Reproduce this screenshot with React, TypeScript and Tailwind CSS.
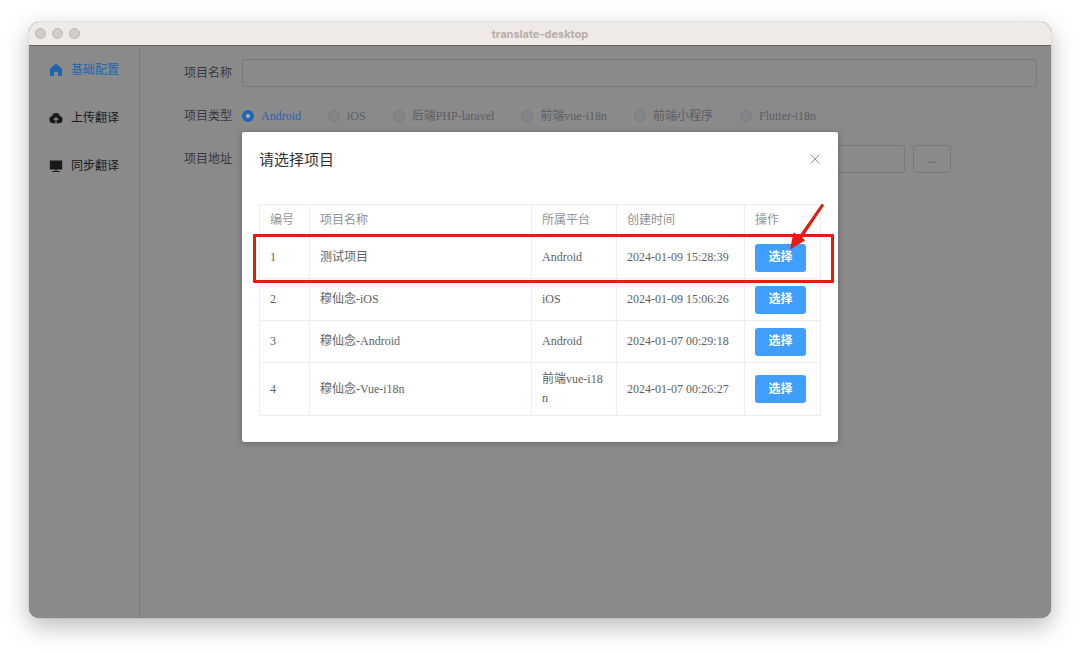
import React from 'react';

type Project = {
  id: number;
  name: string;
  platform: string;
  createdAt: string;
};

const projects: Project[] = [
  { id: 1, name: '测试项目', platform: 'Android', createdAt: '2024-01-09 15:28:39' },
  { id: 2, name: '穆仙念-iOS', platform: 'iOS', createdAt: '2024-01-09 15:06:26' },
  { id: 3, name: '穆仙念-Android', platform: 'Android', createdAt: '2024-01-07 00:29:18' },
  { id: 4, name: '穆仙念-Vue-i18n', platform: '前端vue-i18n', createdAt: '2024-01-07 00:26:27' },
];

const projectTypes = ['Android', 'iOS', '后端PHP-laravel', '前端vue-i18n', '前端小程序', 'Flutter-i18n'];

const HomeIcon = () => (
  <svg viewBox="0 0 14 14" className="size-3.5" fill="currentColor" aria-hidden="true">
    <path d="M6.2 1.2a1.2 1.2 0 0 1 1.6 0l4.8 4.1c.3.3.4.6.4 1v6c0 .4-.3.7-.7.7H9V9.500c0-.3-.2-.5-.5-.5h-3c-.3 0-.5.2-.5.5V13H1.700c-.4 0-.7-.3-.7-.7v-6c0-.4.1-.7.4-1z" />
  </svg>
);

const CloudUploadIcon = () => (
  <svg viewBox="0 0 14 14" className="size-3.5" aria-hidden="true">
    <path
      fill="currentColor"
      d="M7 1.900a4 4 0 0 1 3.900 3.200A3.400 3.400 0 0 1 13.600 8.500a3.700 3.700 0 0 1-3.700 3.700H4.100A3.700 3.700 0 0 1 .4 8.500a3.400 3.400 0 0 1 2.700-3.400A4 4 0 0 1 7 1.900z"
    />
    <path fill="none" stroke="#8a8a8a" strokeWidth="1.1" d="M7 12.300V7M4.800 9 7 6.800 9.200 9" />
  </svg>
);

const MonitorIcon = () => (
  <svg viewBox="0 0 14 14" className="size-3.5" fill="currentColor" aria-hidden="true">
    <path d="M1.200 1.500h11.600c.2 0 .4.200.4.400v8.200c0 .2-.2.400-.4.400H1.200a.4.4 0 0 1-.4-.4V1.900c0-.2.200-.4.400-.4zM6.400 10.500h1.200v1.400H6.400zM3.300 11.900h7.400v1H3.300z" />
  </svg>
);

const menu = [
  { label: '基础配置', icon: <HomeIcon />, active: true },
  { label: '上传翻译', icon: <CloudUploadIcon />, active: false },
  { label: '同步翻译', icon: <MonitorIcon />, active: false },
];

const TitleBar = () => (
  <header className="grid h-6 grid-cols-[1fr_auto_1fr] items-center border-b border-[#626262] bg-[#efeae6] px-1.5">
    <div className="flex gap-1.5">
      <span className="size-[11px] rounded-full border border-[#bdb8b5] bg-[#d2cdca]" />
      <span className="size-[11px] rounded-full border border-[#bdb8b5] bg-[#d2cdca]" />
      <span className="size-[11px] rounded-full border border-[#bdb8b5] bg-[#d2cdca]" />
    </div>
    <h1 className="font-[Inter,sans-serif] text-[11px] leading-4 font-bold text-[#b5afab]">translate-desktop</h1>
  </header>
);

const Sidebar = () => (
  <nav className="w-[111px] shrink-0 border-r border-[#7b7b7c]">
    {menu.map((item) => (
      <a
        key={item.label}
        href="#"
        className={`flex h-12 items-center gap-2 pl-5 ${item.active ? 'text-[#1f66b0]' : 'text-[#19191b]'}`}
      >
        {item.icon}
        {item.label}
      </a>
    ))}
  </nav>
);

const ProjectForm = () => (
  <form className="flex flex-1 flex-col gap-[15px] pt-[13px] pr-3.5 pl-11 text-[#38393b]">
    <div className="flex items-center gap-2.5">
      <label htmlFor="name" className="w-12 shrink-0">
        项目名称
      </label>
      <input id="name" className="h-7 min-w-0 flex-1 rounded-[3px] border border-[#77787a] px-2" />
    </div>
    <div role="radiogroup" aria-labelledby="type-label" className="flex h-7 items-center gap-2.5">
      <span id="type-label" className="w-12 shrink-0">
        项目类型
      </span>
      <div className="flex items-center gap-[27px]">
        {projectTypes.map((type, i) => (
          <label
            key={type}
            className={`flex items-center gap-[7px] whitespace-nowrap ${i === 0 ? 'text-[#1f66b0]' : 'text-[#5c5e62]'}`}
          >
            <input
              type="radio"
              name="type"
              defaultChecked={i === 0}
              disabled={i !== 0}
              className="size-3 appearance-none rounded-full border border-[#7c7d80] bg-[#848588] checked:border-4 checked:border-[#1f66b0] checked:bg-[#a5b4c4]"
            />
            {type}
          </label>
        ))}
      </div>
    </div>
    <div className="flex items-center gap-2.5">
      <label htmlFor="path" className="w-12 shrink-0">
        项目地址
      </label>
      <div className="flex flex-1 gap-2">
        <input id="path" className="h-7 w-5/6 rounded-[3px] border border-[#77787a] px-2" />
        <button type="button" className="h-7 w-[38px] rounded-[3px] border border-[#77787a] text-[#55575a]">
          ...
        </button>
      </div>
    </div>
  </form>
);

const ProjectTable = () => (
  <div className="relative">
    <table className="w-full table-fixed border-collapse text-left leading-[19px] text-[#606266]">
      <colgroup>
        <col className="w-[50px]" />
        <col />
        <col className="w-[85px]" />
        <col className="w-32" />
        <col className="w-[76px]" />
      </colgroup>
      <thead>
        <tr className="h-8 text-[#909399]">
          {['编号', '项目名称', '所属平台', '创建时间', '操作'].map((title) => (
            <th key={title} className="border border-[#ebeef5] px-2.5 font-normal">
              {title}
            </th>
          ))}
        </tr>
      </thead>
      <tbody>
        {projects.map((project) => (
          <tr key={project.id} className="h-[42px]">
            <td className="border border-[#ebeef5] px-2.5">{project.id}</td>
            <td className="border border-[#ebeef5] px-2.5">{project.name}</td>
            <td className="border border-[#ebeef5] px-2.5 py-[7px] break-all">{project.platform}</td>
            <td className="border border-[#ebeef5] px-2.5 whitespace-nowrap">{project.createdAt}</td>
            <td className="border border-[#ebeef5] px-2.5">
              <button type="button" className="block h-7 w-[51px] rounded-[3px] bg-[#409eff] font-bold text-white">
                选择
              </button>
            </td>
          </tr>
        ))}
      </tbody>
    </table>
    <div className="pointer-events-none absolute top-[30px] -right-[13px] -left-1.5 h-[49px] rounded-[1px] border-[3px] border-[#e01f12]" />
    <svg
      viewBox="0 0 36 48"
      className="pointer-events-none absolute -top-px -right-1 h-12 w-9"
      fill="#e01f12"
      aria-hidden="true"
    >
      <path d="M32.800.500 35.200 2.200 13.500 34.500 16 37.500 1 46.500 4.500 29.500 10.500 32.500z" />
    </svg>
  </div>
);

const ProjectDialog = () => (
  <div className="absolute inset-0 flex items-start justify-center pt-[86px]">
    <section
      role="dialog"
      aria-labelledby="dialog-title"
      className="w-[596px] rounded-[2px] bg-white px-[17px] pb-[26px] shadow-[0_1px_6px_rgba(0,0,0,0.3)]"
    >
      <div className="flex h-[72px] items-start justify-between pt-4">
        <h2 id="dialog-title" className="text-[15px] leading-6 text-[#303133]">
          请选择项目
        </h2>
        <button type="button" aria-label="关闭" className="py-1.5 pr-px pl-1 text-[#909399]">
          <svg viewBox="0 0 10 10" className="size-2.5" fill="none" stroke="currentColor" aria-hidden="true">
            <path d="m.7.7 8.600 8.600M9.300.7.7 9.300" />
          </svg>
        </button>
      </div>
      <ProjectTable />
    </section>
  </div>
);

export default function App() {
  return (
    <div className="flex min-h-screen bg-white px-[29px] pt-[22px] pb-9 font-['Liberation_Serif','Noto_Sans_CJK_SC',serif] text-[12px] leading-5">
      <div className="flex flex-1 flex-col overflow-hidden rounded-[10px] bg-[#8a8a8a] shadow-[0_0_1px_rgba(0,0,0,0.5),0_8px_24px_rgba(0,0,0,0.28)]">
        <TitleBar />
        <main className="relative flex flex-1">
          <Sidebar />
          <ProjectForm />
          <ProjectDialog />
        </main>
      </div>
    </div>
  );
}
